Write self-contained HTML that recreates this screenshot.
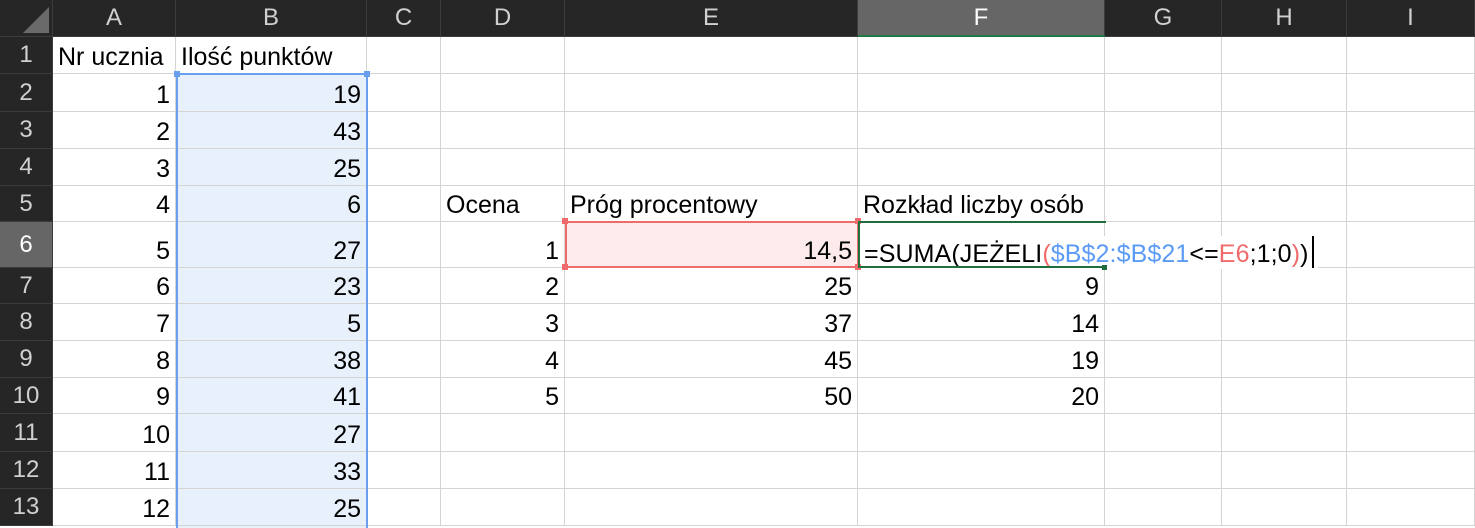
<!DOCTYPE html>
<html style="height:528px;overflow:hidden"><head><meta charset="utf-8"><style>
*{margin:0;padding:0;box-sizing:border-box}
body{width:1475px;height:528px;overflow:hidden;background:#fff;font-family:"Liberation Sans",sans-serif;position:relative}
table{border-collapse:separate;border-spacing:0;table-layout:fixed;position:absolute;left:0;top:0;width:1475px;z-index:1}
td{border-right:1px solid #d4d4d4;border-bottom:1px solid #d4d4d4;font-size:25px;color:#000;vertical-align:bottom;padding:0 5px 1px 5px;white-space:nowrap;overflow:visible;position:relative}
td.r{text-align:right}
tr.h td{background:#262626;color:#d0d0d0;text-align:center;vertical-align:middle;padding:0;border-right:1px solid #3c3c3c;border-bottom:1px solid #3c3c3c;font-size:24px}
td.rh{background:#262626;color:#d0d0d0;text-align:center;vertical-align:middle;padding:0;border-right:1px solid #3c3c3c;border-bottom:1px solid #3c3c3c;font-size:24px}
.ov{position:absolute;z-index:0}
.hd{position:absolute;z-index:2}
.fb{position:absolute;z-index:5}
.t{position:absolute;font-size:25px;white-space:nowrap;z-index:3}
</style></head><body>
<div class="ov" style="left:176px;top:73px;width:192px;height:460px;background:#e8f0fc"></div>
<div class="ov" style="left:565px;top:221px;width:294px;height:47px;background:#fdeaea"></div>
<table>
<colgroup><col style="width:53px"><col style="width:123px"><col style="width:191px"><col style="width:74px"><col style="width:124px"><col style="width:293px"><col style="width:247px"><col style="width:117px"><col style="width:125px"><col style="width:128px"></colgroup>
<tr class="h" style="height:37px"><td style="position:relative"><div style="position:absolute;right:3px;bottom:3px;width:0;height:0;border-left:26px solid transparent;border-bottom:26px solid #6a6a6a"></div></td><td>A</td><td>B</td><td>C</td><td>D</td><td>E</td><td style="background:#666;color:#fff;border-bottom:2px solid #1e7a44">F</td><td>G</td><td>H</td><td>I</td></tr>
<tr style="height:37px"><td class="rh">1</td><td>Nr ucznia</td><td>Ilość punktów</td><td></td><td></td><td></td><td></td><td></td><td></td><td></td></tr>
<tr style="height:38px"><td class="rh">2</td><td class="r">1</td><td class="r">19</td><td></td><td></td><td></td><td></td><td></td><td></td><td></td></tr>
<tr style="height:37px"><td class="rh">3</td><td class="r">2</td><td class="r">43</td><td></td><td></td><td></td><td></td><td></td><td></td><td></td></tr>
<tr style="height:37px"><td class="rh">4</td><td class="r">3</td><td class="r">25</td><td></td><td></td><td></td><td></td><td></td><td></td><td></td></tr>
<tr style="height:36px"><td class="rh">5</td><td class="r">4</td><td class="r">6</td><td></td><td>Ocena</td><td>Próg procentowy</td><td>Rozkład liczby osób</td><td></td><td></td><td></td></tr>
<tr style="height:46px"><td class="rh" style="background:#666;color:#fff">6</td><td class="r">5</td><td class="r">27</td><td></td><td class="r">1</td><td class="r">14,5</td><td></td><td></td><td></td><td></td></tr>
<tr style="height:36px"><td class="rh">7</td><td class="r">6</td><td class="r">23</td><td></td><td class="r">2</td><td class="r">25</td><td class="r">9</td><td></td><td></td><td></td></tr>
<tr style="height:37px"><td class="rh">8</td><td class="r">7</td><td class="r">5</td><td></td><td class="r">3</td><td class="r">37</td><td class="r">14</td><td></td><td></td><td></td></tr>
<tr style="height:37px"><td class="rh">9</td><td class="r">8</td><td class="r">38</td><td></td><td class="r">4</td><td class="r">45</td><td class="r">19</td><td></td><td></td><td></td></tr>
<tr style="height:36px"><td class="rh">10</td><td class="r">9</td><td class="r">41</td><td></td><td class="r">5</td><td class="r">50</td><td class="r">20</td><td></td><td></td><td></td></tr>
<tr style="height:38px"><td class="rh">11</td><td class="r">10</td><td class="r">27</td><td></td><td></td><td></td><td></td><td></td><td></td><td></td></tr>
<tr style="height:37px"><td class="rh">12</td><td class="r">11</td><td class="r">33</td><td></td><td></td><td></td><td></td><td></td><td></td><td></td></tr>
<tr style="height:37px"><td class="rh">13</td><td class="r">12</td><td class="r">25</td><td></td><td></td><td></td><td></td><td></td><td></td><td></td></tr>
</table>
<div class="hd" style="left:176px;top:73px;width:192px;height:460px;border:2px solid #6a9ff0;border-bottom:none"></div>
<div class="hd" style="left:174px;top:71px;width:6px;height:6px;background:#6a9ff0"></div>
<div class="hd" style="left:364px;top:71px;width:6px;height:6px;background:#6a9ff0"></div>
<div class="hd" style="left:565px;top:221px;width:294px;height:47px;border:2px solid #f06b6b"></div>
<div class="hd" style="left:562px;top:218px;width:6px;height:6px;background:#f06b6b"></div>
<div class="hd" style="left:855px;top:218px;width:6px;height:6px;background:#f06b6b"></div>
<div class="hd" style="left:562px;top:264px;width:6px;height:6px;background:#f06b6b"></div>
<div class="hd" style="left:855px;top:264px;width:6px;height:6px;background:#f06b6b"></div>
<div class="t" style="left:864px;top:236px;background:#fff;padding-right:4px;letter-spacing:0.1px">=SUMA(JEŻELI<span style="color:#f06b6b">(</span><span style="color:#5b9bf5">$B$2:$B$21</span>&lt;=<span style="color:#f06b6b">E6</span>;1;0<span style="color:#f06b6b">)</span>)<span style="display:inline-block;width:2px;height:32px;background:#000;vertical-align:-6px;margin-left:3px"></span></div>
<div class="fb" style="left:858px;top:221px;width:2px;height:47px;background:#1e6e3e"></div>
<div class="fb" style="left:860px;top:221px;width:246px;height:2px;background:#1e6e3e"></div>
<div class="fb" style="left:860px;top:266px;width:246px;height:2px;background:#1e6e3e"></div>
<div class="fb" style="left:1102px;top:265px;width:5px;height:5px;background:#1e6e3e"></div>
</body></html>
